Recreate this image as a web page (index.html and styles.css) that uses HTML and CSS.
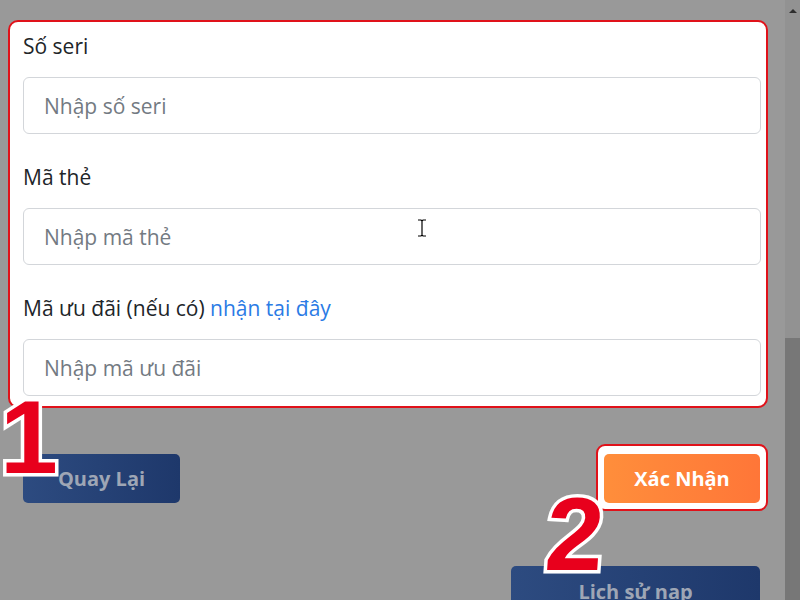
FILE: index.html
```html
<!DOCTYPE html>
<html lang="vi">
<head>
    <meta charset="UTF-8">
    <meta name="viewport" content="width=device-width, initial-scale=1.0">
    <title>Nạp thẻ</title>
    <link rel="stylesheet" href="styles.css">
</head>
<body>
    <div class="screen">
        <div class="page">
            <form class="card-form">
                <div class="form-group">
                    <label for="serial">Số seri</label>
                    <input type="text" id="serial" placeholder="Nhập số seri">
                </div>

                <div class="form-group">
                    <label for="code">Mã thẻ</label>
                    <input type="text" id="code" placeholder="Nhập mã thẻ">
                </div>

                <div class="form-group">
                    <label for="promo">Mã ưu đãi (nếu có) <a href="#">nhận tại đây</a></label>
                    <input type="text" id="promo" placeholder="Nhập mã ưu đãi">
                </div>
            </form>

            <div class="actions">
                <button type="button" class="btn btn-blue btn-back">Quay Lại</button>
                <div class="highlight">
                    <button type="button" class="btn btn-orange">Xác Nhận</button>
                </div>
            </div>

            <div class="history">
                <button type="button" class="btn btn-blue btn-history">Lịch sử nạp</button>
            </div>

            <span class="step step-one">1</span>
            <span class="step step-two">2</span>

            <svg class="cursor" width="10" height="18" viewBox="0 0 10 18">
                <path d="M1 1h3l1 1 1-1h3M5 2v14M1 17h3l1-1 1 1h3" fill="none" stroke="#000" stroke-width="1.2"/>
            </svg>
        </div>

        <div class="scrollbar">
            <div class="scroll-arrow"></div>
            <div class="scroll-track"></div>
            <div class="scroll-thumb"></div>
        </div>
    </div>
</body>
</html>
```

FILE: styles.css
```css
* {
    box-sizing: border-box;
    margin: 0;
    padding: 0;
}

body {
    font-family: 'Open Sans', 'Noto Sans', sans-serif;
    background: #999999;
    overflow: hidden;
}

.screen {
    display: flex;
    width: 800px;
    height: 600px;
}

.page {
    flex: 1;
    position: relative;
    padding-left: 8px;
}

.card-form {
    width: 760px;
    margin-top: 20px;
    background: #fff;
    border: 2px solid #e0121a;
    border-radius: 10px;
    padding: 9px 5px 10px 13px;
}

.form-group {
    margin-bottom: 28px;
}

.form-group:last-child {
    margin-bottom: 0;
}

label {
    display: block;
    font-size: 21px;
    line-height: 30px;
    color: #212529;
    margin-bottom: 16px;
}

label a {
    color: #2b7be5;
    text-decoration: none;
}

input {
    width: 100%;
    height: 57px;
    padding: 0 20px;
    border: 1px solid #d3d6da;
    border-radius: 6px;
    font-family: inherit;
    font-size: 21px;
    color: #212529;
    background: #fff;
}

input::placeholder {
    color: #737a82;
}

.actions {
    display: flex;
    justify-content: space-between;
    align-items: flex-start;
    width: 738px;
    margin: 36px 0 0 15px;
}

.btn {
    height: 49px;
    border: none;
    border-radius: 5px;
    font-family: inherit;
    font-size: 20px;
    font-weight: 700;
    cursor: pointer;
}

.btn-blue {
    background: linear-gradient(90deg, #2d4b80 0%, #1e386b 100%);
    color: #9ea6b5;
}

.btn-back {
    width: 157px;
    margin-top: 10px;
}

.highlight {
    background: #fff;
    border: 2px solid #e0121a;
    border-radius: 9px;
    padding: 8px 6px 6px 6px;
    margin-right: -7px;
}

.btn-orange {
    display: block;
    width: 156px;
    background: linear-gradient(90deg, #ff8e3b 0%, #ff7638 100%);
    color: #fff;
}

.history {
    display: flex;
    justify-content: flex-end;
    width: 737px;
    margin: 55px 0 0 15px;
}

.btn-history {
    width: 249px;
    height: 60px;
    padding-bottom: 10px;
    border-radius: 5px 5px 0 0;
}

.step {
    position: absolute;
    font-family: 'Liberation Sans', Arial, sans-serif;
    font-weight: 700;
    font-size: 104px;
    line-height: 1;
    color: #e8001c;
    -webkit-text-stroke: 7px #fff;
    paint-order: stroke fill;
}

.step-one {
    left: 0;
    top: 385px;
}

.step-two {
    left: 546px;
    top: 482px;
    transform: skewX(-4deg);
}

.cursor {
    position: absolute;
    left: 417px;
    top: 219px;
}

.scrollbar {
    width: 15px;
    display: flex;
    flex-direction: column;
    background: #929292;
}

.scroll-arrow {
    width: 0;
    height: 0;
    margin: 9px auto 0;
    border-left: 4px solid transparent;
    border-right: 4px solid transparent;
    border-bottom: 4px solid #2e2e2e;
}

.scroll-track {
    height: 325px;
}

.scroll-thumb {
    flex: 1;
    background: #777777;
}
```
